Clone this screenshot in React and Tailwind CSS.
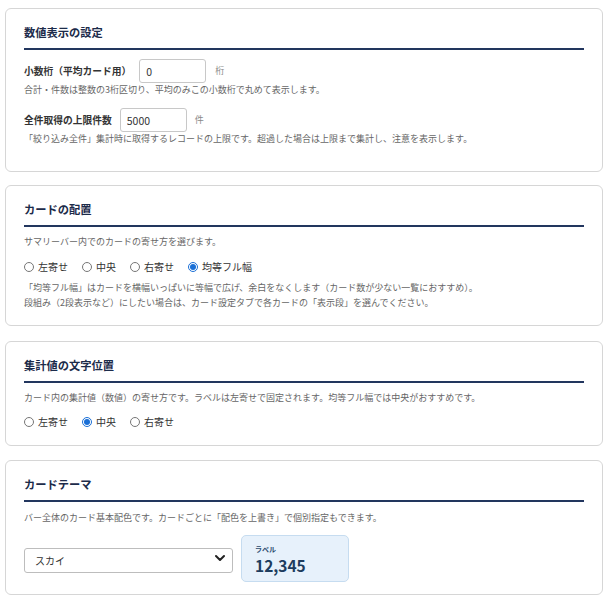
import React, { useState } from 'react';

const FONT = { fontFamily: '"Noto Sans CJK JP", "Noto Sans", sans-serif' };

function Section({ title, className = '', children }) {
  return (
    <section className={`rounded-[6px] border border-[#d6d6d6] bg-white px-[18px] pt-[15px] ${className}`}>
      <h3 className="border-b-2 border-[#22365e] pb-[8px] text-[11.25px] font-bold leading-[16px] text-[#1c2b4a]">
        {title}
      </h3>
      {children}
    </section>
  );
}

function Radio({ name, label, checked, onChange }) {
  return (
    <label className="mr-[14px] flex items-center gap-[4px] text-[10px] leading-[16px] text-[#333]">
      <input
        type="radio"
        name={name}
        checked={checked}
        onChange={onChange}
        className="m-0 h-[10px] w-[10px] accent-[#1a6fd6]"
      />
      {label}
    </label>
  );
}

function RadioGroup({ name, options, value, onChange }) {
  return (
    <div className="flex items-center">
      {options.map((opt) => (
        <Radio key={opt} name={name} label={opt} checked={value === opt} onChange={() => onChange(opt)} />
      ))}
    </div>
  );
}

export default function App() {
  const [decimals, setDecimals] = useState('0');
  const [limit, setLimit] = useState('5000');
  const [layout, setLayout] = useState('均等フル幅');
  const [align, setAlign] = useState('中央');
  const [theme, setTheme] = useState('スカイ');

  return (
    <div className="min-h-screen bg-white pb-[10px] pl-[5px] pr-[3px] pt-[8px]" style={FONT}>
      <Section title="数値表示の設定" className="pb-[25px]">
        <div className="mt-[9px] flex items-center gap-2">
          <span className="text-[9.75px] font-bold text-[#333]">小数桁（平均カード用）</span>
          <input
            value={decimals}
            onChange={(e) => setDecimals(e.target.value)}
            className="h-[24px] w-[67px] rounded-[3px] border border-[#c8c8c8] px-[6px] text-[10.5px] text-[#333] outline-none"
          />
          <span className="ml-[1px] text-[9px] text-[#888]">桁</span>
        </div>
        <p className="text-[9px] leading-[14px] text-[#666]">合計・件数は整数の3桁区切り、平均のみこの小数桁で丸めて表示します。</p>

        <div className="mt-[11px] flex items-center gap-2">
          <span className="text-[9.75px] font-bold text-[#333]">全件取得の上限件数</span>
          <input
            value={limit}
            onChange={(e) => setLimit(e.target.value)}
            className="h-[24px] w-[67px] rounded-[3px] border border-[#c8c8c8] px-[6px] text-[10.5px] text-[#333] outline-none"
          />
          <span className="text-[9px] text-[#888]">件</span>
        </div>
        <p className="text-[9px] leading-[14px] text-[#666]">
          「絞り込み全件」集計時に取得するレコードの上限です。超過した場合は上限まで集計し、注意を表示します。
        </p>
      </Section>

      <Section title="カードの配置" className="mt-[13px] pb-[15px]">
        <p className="mt-[8px] text-[9px] leading-[14px] text-[#666]">サマリーバー内でのカードの寄せ方を選びます。</p>
        <div className="mt-[10px]">
          <RadioGroup name="layout" options={['左寄せ', '中央', '右寄せ', '均等フル幅']} value={layout} onChange={setLayout} />
        </div>
        <div className="mt-[5px] text-[9px] leading-[15px] text-[#666]">
          <p>「均等フル幅」はカードを横幅いっぱいに等幅で広げ、余白をなくします（カード数が少ない一覧におすすめ）。</p>
          <p>段組み（2段表示など）にしたい場合は、カード設定タブで各カードの「表示段」を選んでください。</p>
        </div>
      </Section>

      <Section title="集計値の文字位置" className="mt-[15px] pb-[15px]">
        <p className="mt-[8px] text-[9px] leading-[14px] text-[#666]">
          カード内の集計値（数値）の寄せ方です。ラベルは左寄せで固定されます。均等フル幅では中央がおすすめです。
        </p>
        <div className="mt-[9px]">
          <RadioGroup name="align" options={['左寄せ', '中央', '右寄せ']} value={align} onChange={setAlign} />
        </div>
      </Section>

      <Section title="カードテーマ" className="mt-[14px] pb-[12px]">
        <p className="mt-[9px] text-[9px] leading-[14px] text-[#666]">
          バー全体のカード基本配色です。カードごとに「配色を上書き」で個別指定もできます。
        </p>
        <div className="mt-[10px] flex items-center gap-2">
          <div className="relative h-[25px] w-[209px]">
            <select
              value={theme}
              onChange={(e) => setTheme(e.target.value)}
              className="h-full w-full appearance-none rounded-[3px] border border-[#bdbdbd] bg-white pl-[10px] text-[10px] text-[#333] outline-none"
            >
              <option>スカイ</option>
              <option>ネイビー</option>
              <option>グリーン</option>
            </select>
            <svg
              className="pointer-events-none absolute right-[8px] top-[8px]"
              width="10"
              height="8"
              viewBox="0 0 10 8"
              fill="none"
            >
              <path d="M1 2l4 4 4-4" stroke="#222" strokeWidth="2" strokeLinecap="round" strokeLinejoin="round" />
            </svg>
          </div>
          <div className="flex h-[47px] w-[108px] flex-col justify-center rounded-[5px] border border-[#c6dcf0] bg-[#e7f1fb] px-[13px]">
            <span className="text-[7px] font-bold leading-[10px] text-[#2b4a6d]">ラベル</span>
            <span className="mt-[2px] text-[15.5px] font-bold leading-[18px] text-[#1d3c5e]">12,345</span>
          </div>
        </div>
      </Section>
    </div>
  );
}
